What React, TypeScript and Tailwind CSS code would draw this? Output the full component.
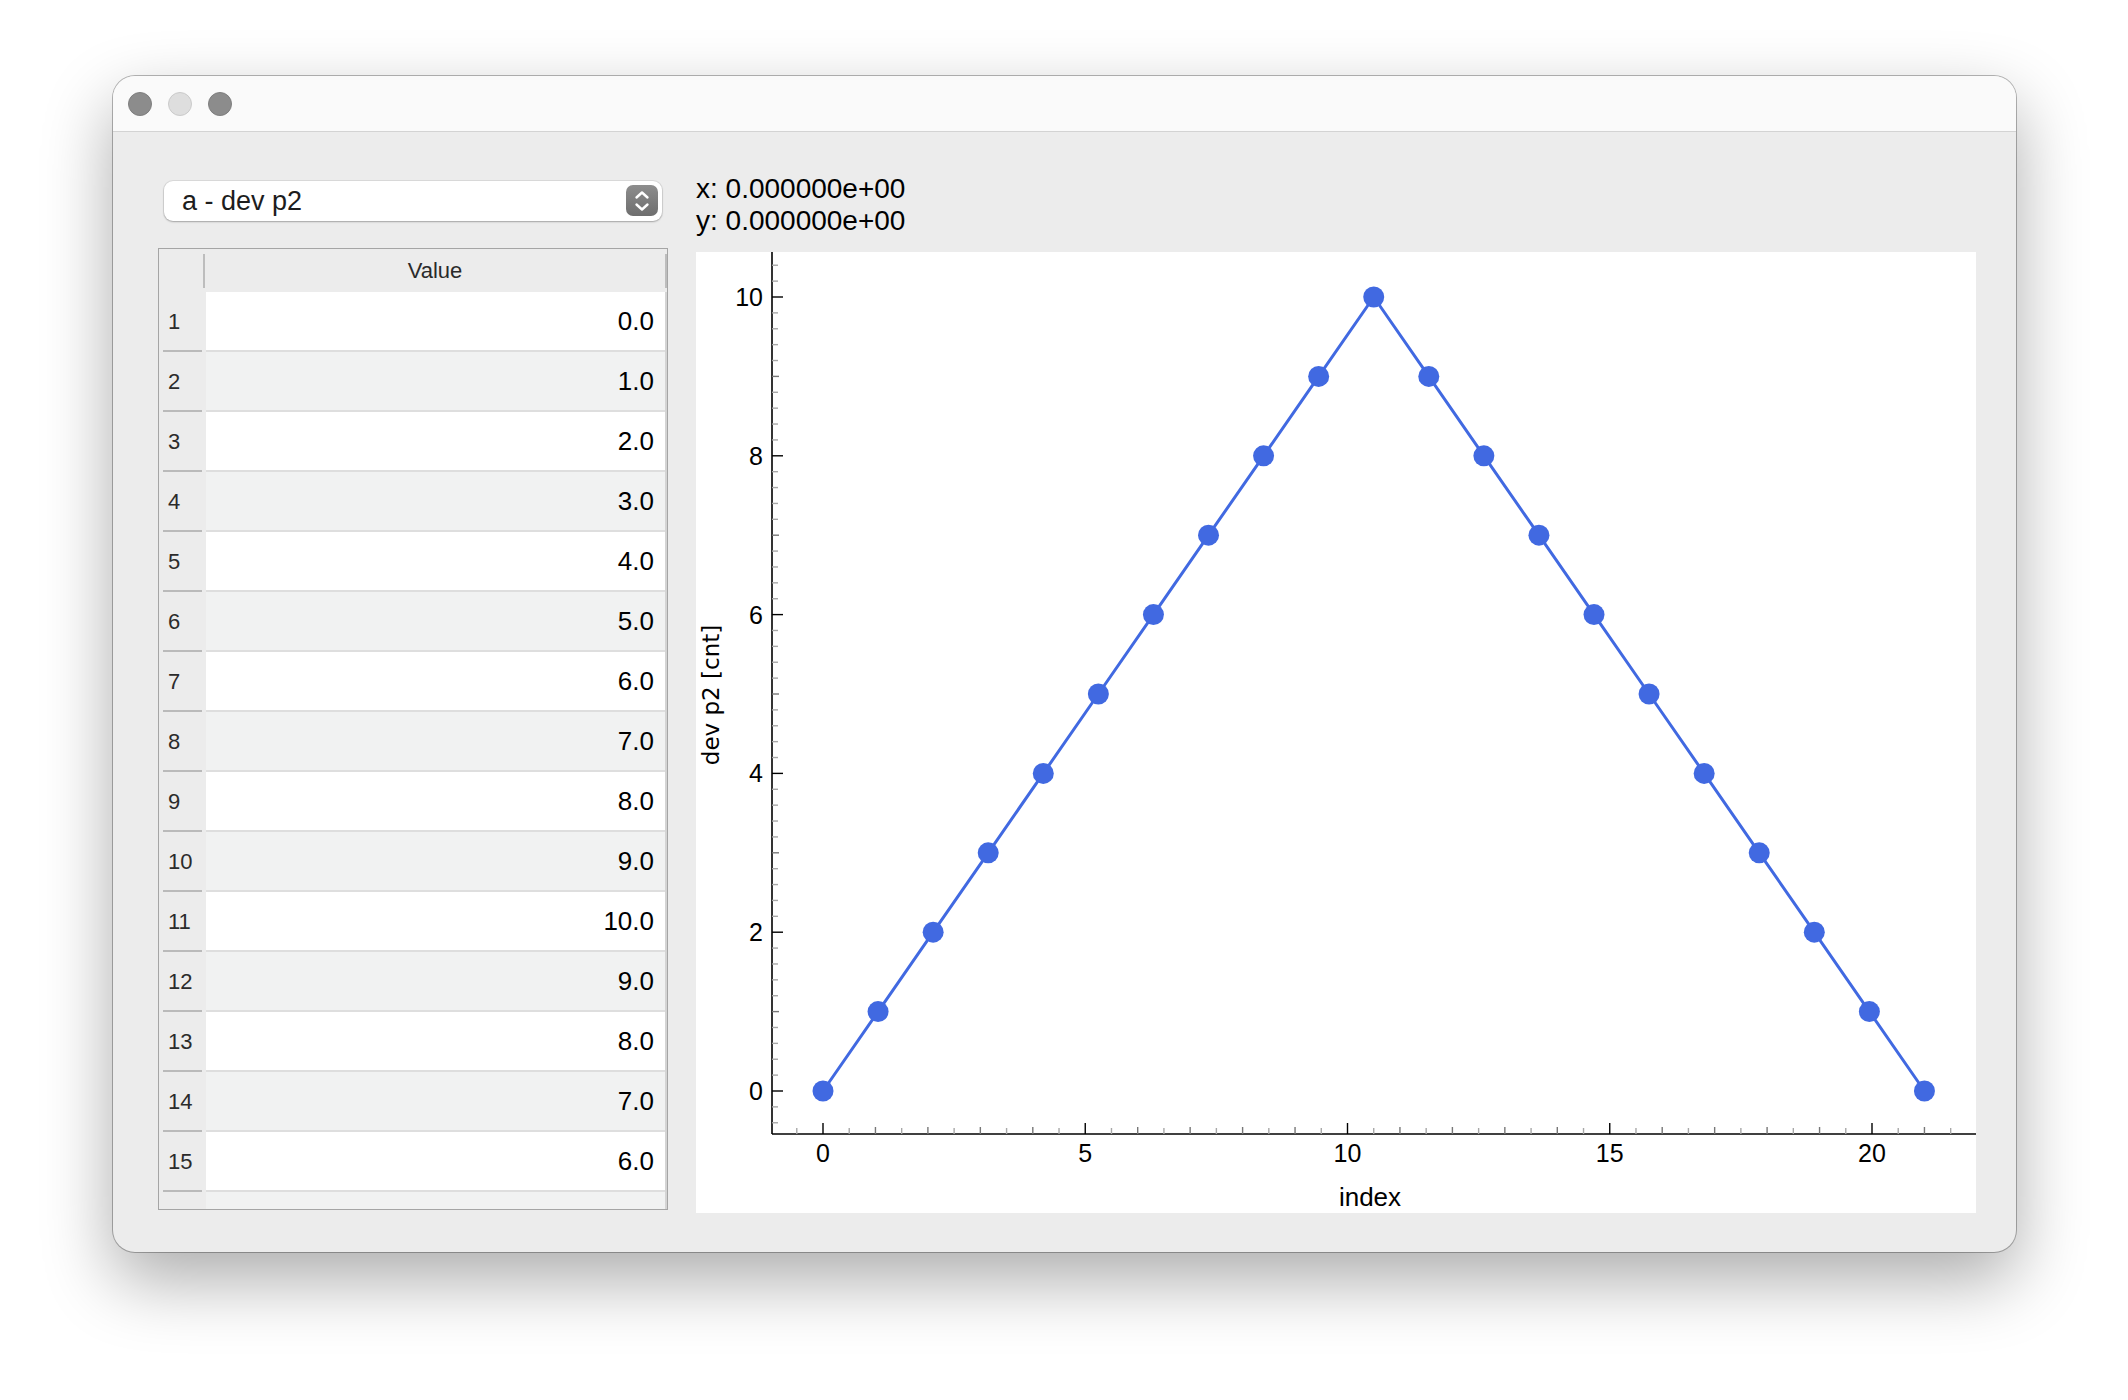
import React from "react";

// plot geometry (local px inside the white plot box)
const X0 = 127;
const XS = 52.45;
const Y0 = 839;
const YS = 79.4;
const AXIS_X = 76;
const AXIS_Y = 882;

const px = (v: number) => X0 + v * XS;
const py = (v: number) => Y0 - v * YS;

const points = Array.from({ length: 21 }, (_, i) => ({
  x: i * 1.05,
  y: 10 - Math.abs(i - 10),
}));

const values = [0, 1, 2, 3, 4, 5, 6, 7, 8, 9, 10, 9, 8, 7, 6];

const font = { fontFamily: '"Liberation Sans", Arial, sans-serif' };

const TrafficLights = () => (
  <div className="flex items-center gap-[16px] pl-[15px]">
    <span className="w-[24px] h-[24px] rounded-full bg-[#8c8c8c] border border-[#7e7e7e]" />
    <span className="w-[24px] h-[24px] rounded-full bg-[#dedede] border border-[#cacaca]" />
    <span className="w-[24px] h-[24px] rounded-full bg-[#8c8c8c] border border-[#7e7e7e]" />
  </div>
);

const Dropdown = () => (
  <div className="mt-[8px] mx-[6px] h-[40px] flex items-center justify-between bg-white rounded-[9px] shadow-[0_0_0_1px_rgba(0,0,0,0.07),0_1px_2px_rgba(0,0,0,0.25)] pl-[18px] pr-[4px]">
    <span className="text-[27px] text-[#1d1d1d] leading-none">a - dev p2</span>
    <span className="w-[32px] h-[31px] mb-[1px] rounded-[7px] bg-gradient-to-b from-[#8d8d8d] to-[#6e6e6e] flex items-center justify-center">
      <svg width="16" height="24" viewBox="0 0 16 24" fill="none">
        <path d="M2.5 8.5 L8 3.5 L13.5 8.5" stroke="white" strokeWidth="2.4" strokeLinecap="round" strokeLinejoin="round" />
        <path d="M2.5 15.5 L8 20.5 L13.5 15.5" stroke="white" strokeWidth="2.4" strokeLinecap="round" strokeLinejoin="round" />
      </svg>
    </span>
  </div>
);

const ValueTable = () => (
  <div className="mt-[27px] h-[962px] border border-[#a5a5a5] bg-[#ececec] flex flex-col overflow-hidden">
    {/* header */}
    <div className="h-[43px] flex shrink-0">
      <div className="w-[46px] flex items-center justify-end">
        <span className="w-[2px] h-[34px] bg-[#bdbdbd]" />
      </div>
      <div className="flex-1 flex items-center justify-center text-[22px] text-[#2a2a2a]">Value</div>
      <div className="w-[2px] flex items-center">
        <span className="w-[2px] h-[34px] bg-[#bdbdbd]" />
      </div>
    </div>
    {/* rows */}
    {[...values, null].map((v, i) => (
      <div key={i} className="h-[60px] flex shrink-0">
        <div className="w-[47px] flex flex-col">
          <div className="flex-1 flex items-center pl-[9px] text-[22px] text-[#2b2b2b]">
            {v === null ? "" : i + 1}
          </div>
          <span className="h-[2px] mx-[4px] bg-[#bababa]" />
        </div>
        <div
          className={`flex-1 flex flex-col ${i % 2 === 0 ? "bg-white" : "bg-[#f1f2f2]"}`}
        >
          <div className="flex-1 flex items-center justify-end pr-[11px] text-[26px] text-black">
            {v === null ? "" : v.toFixed(1)}
          </div>
          <span className="h-[2px] bg-[#dedede]" />
        </div>
        <span className="w-[2px] bg-[#d4d4d4]" />
      </div>
    ))}
  </div>
);

const Plot = () => {
  const yTicks = Array.from({ length: 55 }, (_, k) => k - 2);
  const xTicks = Array.from({ length: 45 }, (_, k) => k - 1);
  const line = points.map((p) => `${px(p.x)},${py(p.y)}`).join(" ");
  return (
    <div className="mt-[15px] w-[1280px] h-[961px] bg-white">
      <svg width="1280" height="961" viewBox="0 0 1280 961" style={font}>
        {/* axes */}
        <line x1={AXIS_X} y1={0} x2={AXIS_X} y2={AXIS_Y} stroke="#000" strokeWidth="1.6" />
        <line x1={AXIS_X} y1={AXIS_Y} x2={1280} y2={AXIS_Y} stroke="#000" strokeWidth="1.6" />

        {/* y ticks */}
        {yTicks.map((k) => {
          const y = py(k * 0.2);
          const major = k % 10 === 0;
          const mid = k % 5 === 0;
          const len = major ? 11 : mid ? 7 : 6;
          return (
            <line
              key={`y${k}`}
              x1={AXIS_X}
              y1={y}
              x2={AXIS_X + len}
              y2={y}
              stroke={major ? "#000" : mid ? "#777" : "#a8a8a8"}
              strokeWidth="1.4"
            />
          );
        })}
        {[0, 2, 4, 6, 8, 10].map((v) => (
          <text key={`yl${v}`} x={67} y={py(v)} textAnchor="end" dominantBaseline="central" fontSize="25" fill="#000">
            {v}
          </text>
        ))}

        {/* x ticks */}
        {xTicks.map((k) => {
          const x = px(k * 0.5);
          const major = k % 10 === 0;
          const mid = k % 2 === 0;
          const len = major ? 11 : mid ? 7 : 6;
          return (
            <line
              key={`x${k}`}
              x1={x}
              y1={AXIS_Y}
              x2={x}
              y2={AXIS_Y - len}
              stroke={major ? "#000" : mid ? "#777" : "#a8a8a8"}
              strokeWidth="1.4"
            />
          );
        })}
        {[0, 5, 10, 15, 20].map((v) => (
          <text key={`xl${v}`} x={px(v)} y={901} textAnchor="middle" dominantBaseline="central" fontSize="25" fill="#000">
            {v}
          </text>
        ))}

        {/* axis titles */}
        <text x={674} y={945} textAnchor="middle" dominantBaseline="central" fontSize="26" fill="#000">
          index
        </text>
        <text
          x={0}
          y={0}
          transform={`translate(15 443) rotate(-90)`}
          textAnchor="middle"
          dominantBaseline="central"
          fontSize="23"
          fill="#000"
          style={{ fontFamily: '"DejaVu Sans", Verdana, sans-serif' }}
        >
          dev p2 [cnt]
        </text>

        {/* data */}
        <polyline points={line} fill="none" stroke="#4169e1" strokeWidth="3" strokeLinejoin="round" />
        {points.map((p, i) => (
          <circle key={i} cx={px(p.x)} cy={py(p.y)} r="10.5" fill="#4169e1" />
        ))}
      </svg>
    </div>
  );
};

const App = () => {
  return (
    <div className="w-[2128px] h-[1400px] bg-white pl-[113px] pt-[76px]" style={font}>
      <div className="w-[1903px] h-[1176px] rounded-[22px] overflow-hidden bg-[#ececec] flex flex-col shadow-[0_28px_70px_rgba(0,0,0,0.33),0_0_0_1px_rgba(0,0,0,0.28)]">
        {/* TITLE BAR */}
        <div className="h-[56px] shrink-0 bg-[#fafafa] border-b border-[#d3d3d3] flex items-center">
          <TrafficLights />
        </div>

        {/* CONTENT */}
        <div className="flex pl-[45px] pt-[41px]">
          {/* LEFT: selector + table */}
          <div className="w-[510px] flex flex-col">
            <Dropdown />
            <ValueTable />
          </div>

          {/* RIGHT: cursor readout + plot */}
          <div className="ml-[28px] flex flex-col">
            <div className="text-[28px] leading-[32px] text-black">
              <div>x: 0.000000e+00</div>
              <div>y: 0.000000e+00</div>
            </div>
            <Plot />
          </div>
        </div>
      </div>
    </div>
  );
};

export default App;
